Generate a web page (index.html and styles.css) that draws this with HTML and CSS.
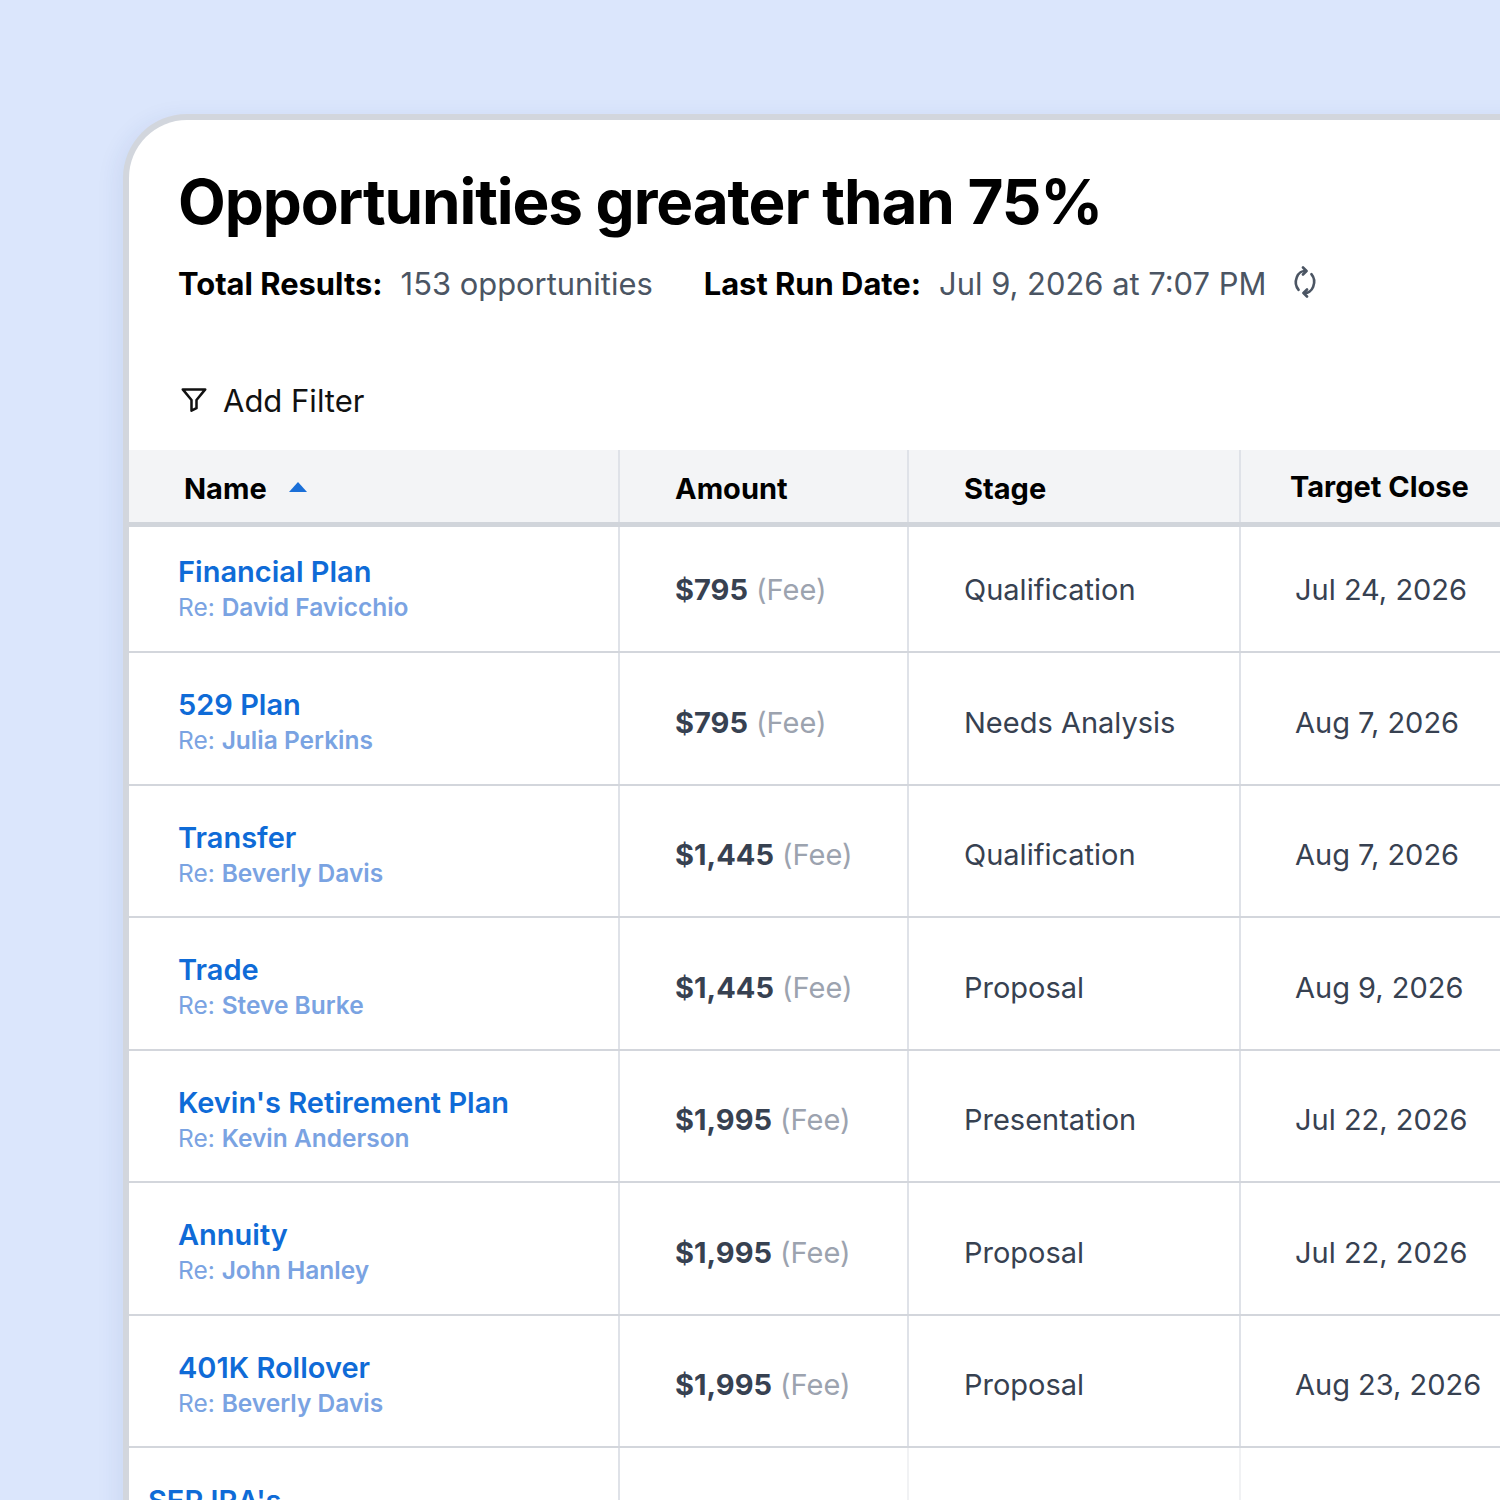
FILE: index.html
```html
<!DOCTYPE html>
<html>
<head>
<meta charset="utf-8">
<link rel="stylesheet" href="styles.css">
</head>
<body>
<div class="page">
  <div class="card">
    <div class="head">
      <h1 class="title">Opportunities greater than 75%</h1>
      <div class="meta">
        <span class="meta-label">Total Results:</span>
        <span class="meta-value">153 opportunities</span>
        <span class="meta-label second">Last Run Date:</span>
        <span class="meta-value">Jul 9, 2026 at 7:07 PM</span>
        <svg class="refresh" viewBox="0 0 26 32" width="26" height="32" fill="none" stroke="#4b5563" stroke-width="2.6" stroke-linecap="round" stroke-linejoin="round">
          <path d="M6.6 23.8A9 11 0 0 1 14 5.05"/>
          <path d="M11 1.5L14.5 5L11 8.5"/>
          <path d="M19.4 8.2A9 11 0 0 1 12 26.95"/>
          <path d="M15 23.5L11.5 27L15 30.5"/>
        </svg>
      </div>
      <div class="filter">
        <svg viewBox="0 0 24 24" width="30" height="30" fill="none" stroke="#111" stroke-width="2" stroke-linejoin="round">
          <polygon points="21 3.5 3 3.5 10 12 10 20.5 14 18.5 14 12 21 3.5"/>
        </svg>
        <span>Add Filter</span>
      </div>
    </div>
    <div class="table">
      <div class="row header">
        <div class="cell c1"><span>Name</span><span class="sort"></span></div>
        <div class="cell c2">Amount</div>
        <div class="cell c3">Stage</div>
        <div class="cell c4 tc">Target Close</div>
      </div>
      <div class="row first">
        <div class="cell c1"><div class="opp">Financial Plan</div><div class="re">Re: <b>David Favicchio</b></div></div>
        <div class="cell c2"><b class="amt">$795</b> <span class="fee">(Fee)</span></div>
        <div class="cell c3">Qualification</div>
        <div class="cell c4">Jul 24, 2026</div>
      </div>
      <div class="row">
        <div class="cell c1"><div class="opp">529 Plan</div><div class="re">Re: <b>Julia Perkins</b></div></div>
        <div class="cell c2"><b class="amt">$795</b> <span class="fee">(Fee)</span></div>
        <div class="cell c3">Needs Analysis</div>
        <div class="cell c4">Aug 7, 2026</div>
      </div>
      <div class="row">
        <div class="cell c1"><div class="opp">Transfer</div><div class="re">Re: <b>Beverly Davis</b></div></div>
        <div class="cell c2"><b class="amt">$1,445</b> <span class="fee">(Fee)</span></div>
        <div class="cell c3">Qualification</div>
        <div class="cell c4">Aug 7, 2026</div>
      </div>
      <div class="row">
        <div class="cell c1"><div class="opp">Trade</div><div class="re">Re: <b>Steve Burke</b></div></div>
        <div class="cell c2"><b class="amt">$1,445</b> <span class="fee">(Fee)</span></div>
        <div class="cell c3">Proposal</div>
        <div class="cell c4">Aug 9, 2026</div>
      </div>
      <div class="row">
        <div class="cell c1"><div class="opp">Kevin's Retirement Plan</div><div class="re">Re: <b>Kevin Anderson</b></div></div>
        <div class="cell c2"><b class="amt">$1,995</b> <span class="fee">(Fee)</span></div>
        <div class="cell c3">Presentation</div>
        <div class="cell c4">Jul 22, 2026</div>
      </div>
      <div class="row">
        <div class="cell c1"><div class="opp">Annuity</div><div class="re">Re: <b>John Hanley</b></div></div>
        <div class="cell c2"><b class="amt">$1,995</b> <span class="fee">(Fee)</span></div>
        <div class="cell c3">Proposal</div>
        <div class="cell c4">Jul 22, 2026</div>
      </div>
      <div class="row">
        <div class="cell c1"><div class="opp">401K Rollover</div><div class="re">Re: <b>Beverly Davis</b></div></div>
        <div class="cell c2"><b class="amt">$1,995</b> <span class="fee">(Fee)</span></div>
        <div class="cell c3">Proposal</div>
        <div class="cell c4">Aug 23, 2026</div>
      </div>
      <div class="row last">
        <div class="cell c1"><div class="opp">SEP IRA's</div></div>
        <div class="cell c2"></div>
        <div class="cell c3"></div>
        <div class="cell c4"></div>
      </div>
    </div>
  </div>
</div>
</body>
</html>
```
FILE: styles.css
```css
* { box-sizing: border-box; }
html, body { margin: 0; padding: 0; }
body {
  background: #dbe6fc;
  font-family: Inter, "Noto Sans", sans-serif;
  color: #111;
}
.page {
  width: 1500px;
  height: 1500px;
  overflow: hidden;
  padding: 114px 0 0 123px;
}
.card {
  width: 1500px;
  height: 1600px;
  background: #fff;
  border: 6px solid #d2d6dd;
  border-right: none;
  border-bottom: none;
  border-top-left-radius: 64px;
  box-shadow: -6px 4px 22px rgba(40, 70, 140, 0.08);
  overflow: hidden;
}
.head {
  padding: 42px 0 0 49px;
}
.title {
  margin: 0;
  font-size: 62px;
  font-weight: 700;
  letter-spacing: -1.1px;
  line-height: 80px;
  color: #000;
}
.meta {
  display: flex;
  align-items: center;
  margin-top: 24px;
  font-size: 30.9px;
  line-height: 36px;
}
.meta-label {
  font-weight: 700;
  color: #000;
  margin-right: 18px;
}
.meta-label.second { margin-left: 51px; }
.meta-value { color: #4b5563; }
.refresh { margin-left: 26px; margin-top: -4px; }
.filter {
  display: flex;
  align-items: center;
  gap: 14px;
  margin-top: 73px;
  padding-left: 1px;
  height: 50px;
  font-size: 31px;
  color: #111;
}
.table {
  margin-top: 25px;
}
.row {
  display: flex;
  height: 132.5px;
  border-bottom: 2px solid #d3d6dc;
}
.row.first { height: 126px; }
.cell {
  flex-shrink: 0;
  display: flex;
  flex-direction: column;
  justify-content: center;
  border-right: 2px solid #dfe2e8;
  font-size: 29px;
  color: #374151;
  padding-top: 8px;
}
.row.first .cell { padding-top: 0; }
.c1 { width: 491px; padding-left: 49px; }
.c2 { width: 289px; padding-left: 55px; flex-direction: row; align-items: center; justify-content: flex-start; }
.c3 { width: 332px; padding-left: 55px; }
.c4 { width: 400px; padding-left: 54px; border-right: none; }
.row.header {
  height: 77px;
  background: #f3f4f6;
  border-bottom: 5px solid #d1d5db;
}
.row.header .cell {
  font-weight: 700;
  color: #000;
  padding-top: 5px;
}
.row.header .c1 {
  flex-direction: row;
  align-items: center;
  justify-content: flex-start;
  padding-left: 55px;
}
.row.header .tc { padding-left: 49px; padding-top: 0; }
.sort {
  width: 0;
  height: 0;
  margin-left: 22px;
  border-left: 9px solid transparent;
  border-right: 9px solid transparent;
  border-bottom: 10px solid #1a6fd8;
  margin-bottom: 4px;
}
.opp {
  color: #0f6bd7;
  font-weight: 600;
  font-size: 29px;
  line-height: 36px;
}
.re {
  color: #7aa3e2;
  font-size: 24.5px;
  line-height: 34px;
}
.re b { font-weight: 600; }
.amt { font-weight: 700; color: #374151; }
.fee { color: #9ca3af; margin-left: 8px; }
.row.last { border-bottom: none; }
.row.last .c1 { padding-left: 19px; justify-content: flex-start; padding-top: 35px; }
.row.last .c3, .row.last .c2 { border-right-color: #f1f2f4; }
```
